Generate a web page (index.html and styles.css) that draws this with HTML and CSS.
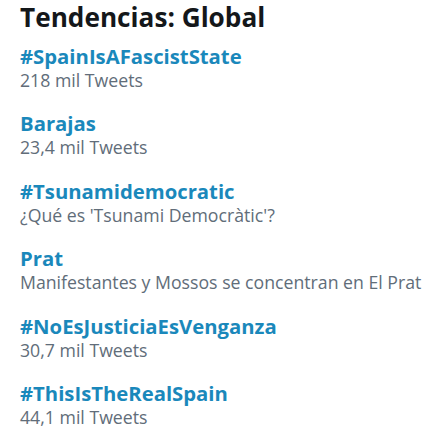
FILE: index.html
```html
<!DOCTYPE html>
<html lang="es">
<head>
<meta charset="utf-8">
<link rel="stylesheet" href="styles.css">
</head>
<body>
<main class="trends">
  <h1 class="title">Tendencias: Global</h1>
  <ul class="list">
    <li class="item"><a class="tag">#SpainIsAFascistState</a><span class="meta">218 mil Tweets</span></li>
    <li class="item"><a class="tag">Barajas</a><span class="meta">23,4 mil Tweets</span></li>
    <li class="item"><a class="tag">#Tsunamidemocratic</a><span class="meta">¿Qué es 'Tsunami Democràtic'?</span></li>
    <li class="item"><a class="tag">Prat</a><span class="meta">Manifestantes y Mossos se concentran en El Prat</span></li>
    <li class="item"><a class="tag">#NoEsJusticiaEsVenganza</a><span class="meta">30,7 mil Tweets</span></li>
    <li class="item"><a class="tag">#ThisIsTheRealSpain</a><span class="meta">44,1 mil Tweets</span></li>
  </ul>
</main>
</body>
</html>
```
FILE: styles.css
```css
html, body {
  margin: 0;
  padding: 0;
  background: #ffffff;
}
body {
  font-family: "Open Sans", "Noto Sans", sans-serif;
}
.trends {
  padding: 2px 0 0 20px;
}
.title {
  margin: 0;
  font-size: 26.2px;
  line-height: 30px;
  font-weight: 700;
  color: #14171a;
}
.list {
  list-style: none;
  margin: 12px 0 0 0;
  padding: 0;
  display: flex;
  flex-direction: column;
  gap: 19.4px;
}
.item {
  display: flex;
  flex-direction: column;
}
.tag {
  font-size: 20.3px;
  line-height: 24px;
  font-weight: 700;
  color: #1a88bb;
}
.meta {
  font-size: 17.7px;
  line-height: 24px;
  color: #616d79;
}
```
